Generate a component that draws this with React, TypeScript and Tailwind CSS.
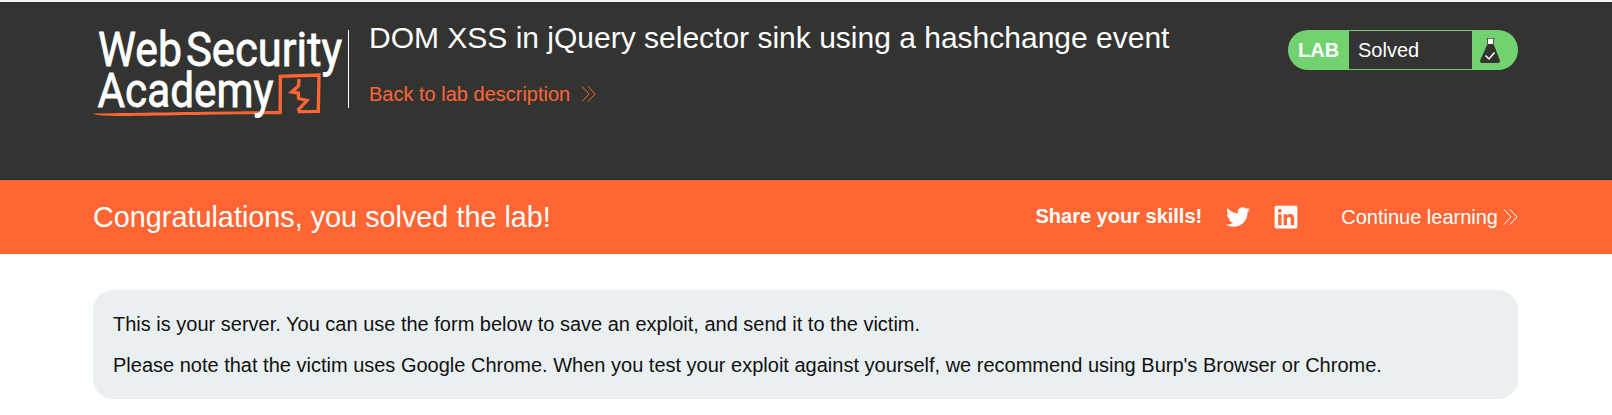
import React from "react";
import { FaTwitter, FaLinkedin } from "react-icons/fa";

function Chevrons({ className }: { className: string }) {
  return (
    <svg viewBox="0 0 15 16" fill="none" stroke="currentColor" strokeWidth="1" className={className}>
      <path d="M1 0.5 8 8 1 15.5M7 0.5 14 8 7 15.5" />
    </svg>
  );
}

function Logo() {
  return (
    <svg viewBox="0 0 256 98" className="h-[98px] w-[256px] shrink-0 overflow-visible">
      <g fill="none" stroke="#ff6633">
        <path d="M0 86.5C6 90 30 89 80 88.200 120 87.500 150 87 188.600 87.200V84C140 84.300 60 85.500 0 86.500Z" fill="#ff6633" stroke="none" />
        <path d="M187.200 86.500 187.300 49.400 226 48 225.300 84.300 206.300 84.600 205.700 82.500 214 73.500 205.500 71.500 205.300 66 198.700 65 205.500 59 206 52" strokeWidth="3.300" />
      </g>
      <g fill="#ffffff" stroke="#ffffff" strokeWidth="0.8" fontFamily="Roboto, sans-serif" fontSize="47.5" fontWeight="400">
        <text x="5" y="38.600" textLength="84" lengthAdjust="spacingAndGlyphs">Web</text>
        <text x="93" y="38.600" textLength="156" lengthAdjust="spacingAndGlyphs">Security</text>
        <text x="4.500" y="79.500" textLength="176" lengthAdjust="spacingAndGlyphs">Academy</text>
      </g>
      <path d="M255.5 3V81" stroke="#ffffff" />
    </svg>
  );
}

function Flask() {
  return (
    <svg viewBox="0 0 20 25" className="ml-2 h-[25px] w-5">
      <path d="M8 0H13V6H8Z" fill="#fff" />
      <path d="M6.500 0.500H14.500M7.500 1V6M13.500 1V6" stroke="#333332" strokeWidth="0.7" />
      <path d="M7.500 6H13.500L19.800 22Q20.500 25 18 25H2Q-.5 25 .3 22Z" fill="#333332" />
      <path d="M5.500 17.500 9 21 14.500 14.500" fill="none" stroke="#fff" strokeWidth="1.500" />
    </svg>
  );
}

export default function App() {
  return (
    <div className="h-[415px] w-full overflow-hidden bg-white font-['Liberation_Sans',Arial,sans-serif] text-[20px] text-[#111111]">
      <header className="flex h-[180px] items-start border-t-2 border-[#f1f3f4] bg-[#333332] pt-[25px] pr-[94px] pl-[93px] shadow-[inset_0_-1px_0_#262b2b]">
        <Logo />
        <div className="ml-5 flex flex-col items-start">
          <h1 className="-mt-[6px] text-[30px] leading-[34px] whitespace-nowrap text-white">
            DOM XSS in jQuery selector sink using a hashchange event
          </h1>
          <a className="mt-[28px] flex items-center leading-[23px] whitespace-nowrap text-[#ff6633]">
            Back to lab description
            <Chevrons className="mb-[2px] ml-[11px] h-4 w-[15px]" />
          </a>
        </div>
        <div className="mt-[3px] ml-auto flex h-10 w-[230px] items-center overflow-hidden rounded-full bg-[#71d26f]">
          <span className="w-[61px] pl-[10px] font-bold text-white">LAB</span>
          <span className="flex h-[38px] w-[123px] items-center bg-[#333332] pl-[9px] text-white">Solved</span>
          <Flask />
        </div>
      </header>
      <section className="flex h-[74px] items-center bg-[#ff6633] pr-[94px] pl-[93px] text-white">
        <h2 className="text-[28.8px] leading-8 whitespace-nowrap">Congratulations, you solved the lab!</h2>
        <div className="ml-auto flex items-center whitespace-nowrap">
          <b className="pb-[2px]">Share your skills!</b>
          <FaTwitter className="ml-6 size-6" />
          <FaLinkedin className="ml-[23px] size-[26px]" />
          <a className="ml-[42px] flex items-center">
            Continue learning
            <Chevrons className="ml-[5px] h-4 w-[15px]" />
          </a>
        </div>
      </section>
      <main className="pt-9 pr-[94px] pl-[93px]">
        <div className="h-[109px] rounded-[20px] bg-[#eaf0f2] px-5 pt-[23px] whitespace-nowrap">
          <p className="leading-[23px]">This is your server. You can use the form below to save an exploit, and send it to the victim.</p>
          <p className="mt-[18px] leading-[23px]">
            Please note that the victim uses Google Chrome. When you test your exploit against yourself, we recommend using Burp's Browser or Chrome.
          </p>
        </div>
      </main>
    </div>
  );
}
